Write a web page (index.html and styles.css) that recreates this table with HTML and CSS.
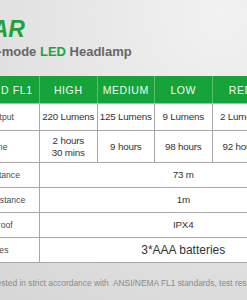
FILE: index.html
```html
<!DOCTYPE html>
<html lang="en">
<head>
    <meta charset="UTF-8">
    <meta name="viewport" content="width=device-width, initial-scale=1.0">
    <title>STAR Headlamp - Specs</title>
    <link rel="stylesheet" href="styles.css">
</head>
<body>
    <div class="sheet">
        <div class="brand">
            <div class="name">STAR</div>
            <div class="tagline">Multi-mode <span class="led">LED</span> Headlamp</div>
        </div>

        <table class="specs">
            <colgroup>
                <col class="col-label">
                <col class="col-mode">
                <col class="col-mode">
                <col class="col-mode">
                <col class="col-mode">
                <col class="col-mode">
            </colgroup>
            <thead>
                <tr>
                    <th class="label">STANDARD FL1</th>
                    <th>HIGH</th>
                    <th>MEDIUM</th>
                    <th>LOW</th>
                    <th>RED</th>
                    <th>FLASH</th>
                </tr>
            </thead>
            <tbody>
                <tr class="row-output">
                    <td class="label">Light output</td>
                    <td>220 Lumens</td>
                    <td>125 Lumens</td>
                    <td>9 Lumens</td>
                    <td>2 Lumens</td>
                    <td>220 Lumens</td>
                </tr>
                <tr class="row-runtime">
                    <td class="label">Runtime</td>
                    <td>2 hours<br>30 mins</td>
                    <td>9 hours</td>
                    <td>98 hours</td>
                    <td>92 hours</td>
                    <td>30 hours</td>
                </tr>
                <tr class="row-short">
                    <td class="label">Beam distance</td>
                    <td colspan="5">73 m</td>
                </tr>
                <tr class="row-short">
                    <td class="label">Impact resistance</td>
                    <td colspan="5">1m</td>
                </tr>
                <tr class="row-short">
                    <td class="label">Waterproof</td>
                    <td colspan="5">IPX4</td>
                </tr>
                <tr class="row-short">
                    <td class="label">Batteries</td>
                    <td colspan="5" class="big">3*AAA batteries</td>
                </tr>
            </tbody>
        </table>

        <p class="note">All data tested in strict accordance with&nbsp; ANSI/NEMA FL1 standards, test results may vary.</p>
    </div>
</body>
</html>
```

FILE: styles.css
```css
html, body {
    margin: 0;
    height: 100%;
}
body {
    font-family: "Liberation Sans", Arial, sans-serif;
    background: radial-gradient(circle at 90% 5%, #f2f2f2 0%, #e4e4e4 50%, #d6d6d6 100%);
    overflow: hidden;
}
.sheet {
    width: 420px;
    margin-left: -60px;
    padding-top: 16px;
}
.brand {
    padding-left: 24px;
}
.name {
    color: #1fa23c;
    font-size: 23px;
    font-weight: bold;
    font-style: italic;
    line-height: 26px;
}
.tagline {
    margin-top: 2px;
    margin-left: 3px;
    color: #666;
    font-size: 13px;
    font-weight: bold;
    line-height: 15px;
}
.led {
    color: #1fa23c;
}
.specs {
    margin-top: 17px;
    border-collapse: collapse;
    table-layout: fixed;
    width: 387px;
}
.col-label {
    width: 99px;
}
.col-mode {
    width: 57.5px;
}
.specs th {
    height: 27px;
    padding: 0;
    background-color: #16a339;
    color: #f2fbf3;
    font-size: 10.5px;
    font-weight: normal;
    letter-spacing: 0.6px;
    text-align: center;
    border-left: 1px solid #5cc073;
    border-bottom: 1px solid #b5b5b5;
}
.specs td {
    padding: 0;
    background-color: #fff;
    color: #333;
    font-size: 9.8px;
    letter-spacing: -0.2px;
    line-height: 12px;
    text-align: center;
    border: 1px solid #a8a8a8;
}
.specs td.label {
    color: #4a4a4a;
    font-size: 8.6px;
    letter-spacing: 0;
    padding-left: 3px;
}
.specs td.big {
    font-size: 12px;
    letter-spacing: 0;
}
.row-output td {
    height: 26px;
}
.row-runtime td {
    height: 31px;
}
.row-short td {
    height: 24px;
}
.note {
    margin: 15px 0 0;
    padding-left: 24px;
    color: #8a8a8a;
    font-size: 8.4px;
    white-space: nowrap;
}
```
